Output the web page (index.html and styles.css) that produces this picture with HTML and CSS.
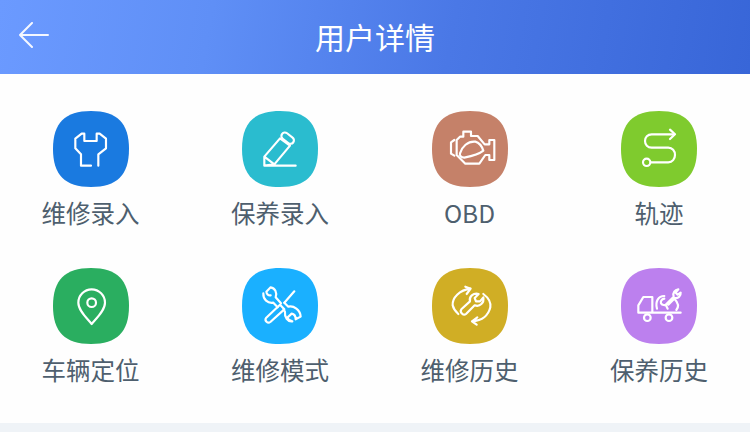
FILE: index.html
```html
<!DOCTYPE html>
<html lang="zh-CN">
<head>
<meta charset="utf-8">
<title>用户详情</title>
<link rel="stylesheet" href="styles.css">
</head>
<body>
<header class="topbar">
  <button class="back" type="button" aria-label="返回">
    <svg width="30" height="26" viewBox="0 0 30 26"><path d="M13 1 1 13l12 12M1 13h28"/></svg>
  </button>
  <h1 class="title">用户详情</h1>
</header>
<main class="menu">
  <a class="tile">
    <svg class="badge" viewBox="0 0 76 76"><path class="shape repair" d="M38 0C64 0 76 12 76 38S64 76 38 76 0 64 0 38 12 0 38 0Z"/>
      <g class="glyph" transform="translate(-8 -6) scale(.3333)"><path d="M138 182H108V148L91 130V101L110 86H118V108H155V86H164L183 101V130L160 148V182"/></g></svg>
    <span class="label">维修录入</span>
  </a>
  <a class="tile">
    <svg class="badge" viewBox="0 0 76 76"><path class="shape entry" d="M38 0C64 0 76 12 76 38S64 76 38 76 0 64 0 38 12 0 38 0Z"/>
      <g class="glyph" transform="translate(-7 -6) scale(.3333)"><path d="M88 182H182M88 182V155L135 100 165 122 118 178ZM88 155 118 178"/><rect x="137" y="89" width="42" height="21" rx="10.5" transform="rotate(38 158 99.500)"/></g></svg>
    <span class="label">保养录入</span>
  </a>
  <a class="tile">
    <svg class="badge" viewBox="0 0 76 76"><path class="shape obd" d="M38 0C64 0 76 12 76 38S64 76 38 76 0 64 0 38 12 0 38 0Z"/>
      <g class="glyph" transform="translate(-6 -6) scale(.3333)"><path d="M85 105 75 112V146L85 152"/><path d="M92 150V105L102 95H112V80H135V93H155L176 118H190V105H205V165H190V150H178L160 176H118Z"/><path d="M102 145C108 125 125 108 148 110 160 113 168 125 172 137 160 147 130 155 115 158 105 158 100 152 102 145Z"/></g></svg>
    <span class="label">OBD</span>
  </a>
  <a class="tile">
    <svg class="badge" viewBox="0 0 76 76"><path class="shape track" d="M38 0C64 0 76 12 76 38S64 76 38 76 0 64 0 38 12 0 38 0Z"/>
      <g class="glyph" transform="translate(-6 -6) scale(.3333)"><path d="M178 88H110C98 88 90 97 90 108S98 128 110 128H160C172 128 180 138 180 150S172 172 160 172H107"/><path d="M165 74 180 88 165 102"/><circle cx="95" cy="172" r="11"/></g></svg>
    <span class="label">轨迹</span>
  </a>
  <a class="tile">
    <svg class="badge" viewBox="0 0 76 76"><path class="shape locate" d="M38 0C64 0 76 12 76 38S64 76 38 76 0 64 0 38 12 0 38 0Z"/>
      <g class="glyph" transform="translate(-8 -6) scale(.3333)"><path d="M140 186C125 168 100 145 100 122A40 40 0 0 1 180 122C180 145 155 168 140 186Z"/><circle cx="140" cy="122" r="13"/></g></svg>
    <span class="label">车辆定位</span>
  </a>
  <a class="tile">
    <svg class="badge" viewBox="0 0 76 76"><path class="shape mode" d="M38 0C64 0 76 12 76 38S64 76 38 76 0 64 0 38 12 0 38 0Z"/>
      <g class="glyph" transform="translate(-7 -6) scale(.3333)"><path d="M107 76C120 78 127 92 122 106L138 124M107 76 94 89C95 97 100 101 107 100M85 94C84 112 98 125 115 122L128 136"/><path d="M178 88 148 122M135 128 148 142 106 180C98 186 88 176 93 168Z"/><path d="M148 122 160 134C176 130 196 144 197 164L182 172C182 162 176 156 170 155L158 166C158 170 162 175 172 178 158 180 148 165 150 150L146 142"/></g></svg>
    <span class="label">维修模式</span>
  </a>
  <a class="tile">
    <svg class="badge" viewBox="0 0 76 76"><path class="shape history" d="M38 0C64 0 76 12 76 38S64 76 38 76 0 64 0 38 12 0 38 0Z"/>
      <g class="glyph" transform="translate(-6 -6) scale(.3333)"><path d="M134 80C100 84 78 108 80 130 82 140 88 148 97 156M118 74 134 80 122 96"/><path d="M172 96C188 108 195 122 193 136 188 158 170 176 138 178M154 166 138 178 152 188"/><path d="M106 142 132 118C128 104 142 92 158 96L146 108 150 118 162 118 172 106C175 122 162 136 146 130L120 156C112 162 100 150 106 142Z"/></g></svg>
    <span class="label">维修历史</span>
  </a>
  <a class="tile">
    <svg class="badge" viewBox="0 0 76 76"><path class="shape care" d="M38 0C64 0 76 12 76 38S64 76 38 76 0 64 0 38 12 0 38 0Z"/>
      <g class="glyph" transform="translate(-6 -6) scale(.3333)"><path d="M70 152V130L85 105H112V152M70 152H197"/><circle cx="97" cy="167" r="10"/><circle cx="162" cy="167" r="10"/><path d="M126 140C120 118 130 102 148 102M178 110C190 122 192 134 184 144"/><path d="M148 110C140 112 136 118 138 124 142 130 150 130 152 128L158 140M152 128 176 104C172 92 180 84 190 82L182 92 188 98 197 92C198 102 190 110 180 108L160 128"/></g></svg>
    <span class="label">保养历史</span>
  </a>
</main>
<div class="strip"></div>
</body>
</html>
```
FILE: styles.css
```css
* { box-sizing: border-box; }

html, body { height: 100%; }

body {
  margin: 0;
  display: flex;
  flex-direction: column;
  overflow: hidden;
  background: #fefefe;
  font-family: "Noto Sans CJK SC", "Noto Sans", sans-serif;
}

/* Top navigation bar */
.topbar {
  flex: none;
  height: 74px;
  display: flex;
  align-items: center;
  justify-content: center;
  position: relative;
  background: linear-gradient(100deg, #6b9aff 0%, #5f8ff6 28%, #4a78e6 60%, #3866d8 100%);
}

.back {
  position: absolute;
  left: 19px;
  top: 22px;
  padding: 0;
  border: 0;
  background: none;
  line-height: 0;
}

.back path {
  fill: none;
  stroke: #f4f7ff;
  stroke-width: 2;
  stroke-linecap: round;
  stroke-linejoin: round;
}

.title {
  margin: 0;
  font-size: 30px;
  font-weight: 400;
  line-height: 72px;
  height: 74px;
  color: #fff;
}

/* Function grid */
.menu {
  flex: 1;
  display: grid;
  grid-template-columns: repeat(4, 76px);
  grid-auto-rows: 120px;
  justify-content: space-between;
  align-content: start;
  row-gap: 37px;
  padding: 37px 53px 0 52.5px;
}

.tile {
  display: flex;
  flex-direction: column;
  align-items: center;
}

.badge {
  flex: none;
  width: 76px;
  height: 76px;
}

.shape.repair { fill: #1a7ae0; }
.shape.entry { fill: #2abccf; }
.shape.obd { fill: #c58169; }
.shape.track { fill: #7fcb2e; }
.shape.locate { fill: #2aae60; }
.shape.mode { fill: #1ab0ff; }
.shape.history { fill: #d0ae25; }
.shape.care { fill: #bc80ee; }

.glyph, .glyph path, .glyph circle, .glyph rect {
  fill: none;
  stroke: #fff;
  stroke-width: 6.5;
  stroke-linecap: round;
  stroke-linejoin: round;
}

.label {
  margin-top: 8.500px;
  font-size: 24.5px;
  line-height: 34px;
  white-space: nowrap;
  color: #4e5f6e;
}

.strip {
  flex: none;
  height: 9px;
  background: #eff3f7;
}
```
